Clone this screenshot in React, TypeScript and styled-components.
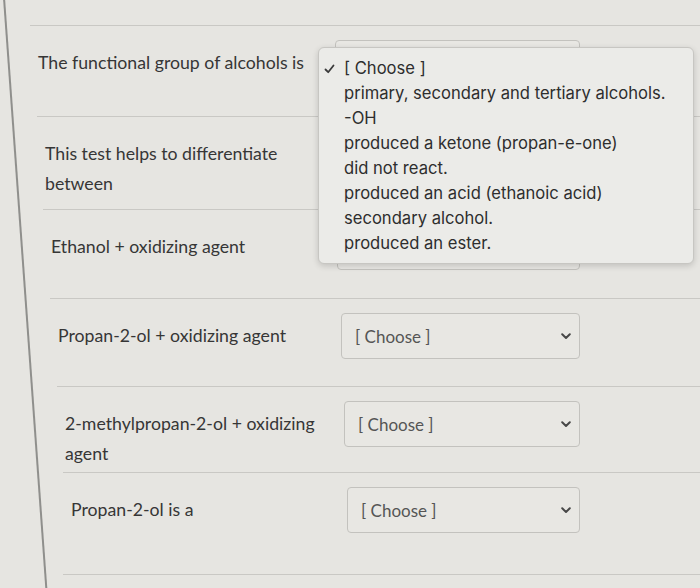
import React from "react";
import styled, { createGlobalStyle } from "styled-components";

const Global = createGlobalStyle`
  html, body { margin: 0; padding: 0; background: #e6e5e1; }
  body { font-family: Lato, "Liberation Sans", sans-serif; }
`;

const Page = styled.div`
  position: relative;
  width: 700px;
  height: 588px;
  overflow: hidden;
  background: #e6e5e1;
  padding-top: 25px;
  box-sizing: border-box;
  &::before {
    content: "";
    position: absolute;
    left: 3px;
    top: -2px;
    width: 1.5px;
    height: 610px;
    background: #8f8f8c;
    transform-origin: top left;
    transform: rotate(-4.1deg);
  }
`;

const Row = styled.div<{ $indent: number; $h: number; $last?: boolean }>`
  display: flex;
  align-items: flex-start;
  margin-left: ${(p) => p.$indent}px;
  height: ${(p) => p.$h}px;
  border-top: 1px solid #c9c8c4;
  ${(p) => (p.$last ? "border-bottom: 1px solid #c9c8c4;" : "")}
  box-sizing: border-box;
`;

const Label = styled.div<{ $w: number }>`
  flex: none;
  width: ${(p) => p.$w}px;
  box-sizing: border-box;
  padding: 22px 10px 0 8px;
  font-size: 17.7px;
  line-height: 30px;
  color: #363636;
`;

const SelectBox = styled.div<{ $w: number }>`
  position: relative;
  flex: none;
  width: ${(p) => p.$w}px;
  height: 46px;
  margin-top: 14px;
  border: 1px solid #c3c2be;
  border-radius: 4px;
  display: flex;
  align-items: center;
  justify-content: space-between;
  padding: 0 8px 0 13px;
  box-sizing: border-box;
  font-size: 17px;
  color: #555;
  background: #e8e7e3;
`;

const Value = styled.span<{ $hidden?: boolean }>`
  visibility: ${(p) => (p.$hidden ? "hidden" : "visible")};
`;

const Chevron = () => (
  <svg width="10" height="7" viewBox="0 0 10 7">
    <path d="M1.2 1.3 L5 5 L8.8 1.3" fill="none" stroke="#474747" strokeWidth="2" strokeLinecap="round" strokeLinejoin="round" />
  </svg>
);

const Menu = styled.div`
  position: absolute;
  left: -18px;
  top: 6px;
  width: 376px;
  z-index: 10;
  box-sizing: border-box;
  padding: 8px 0 7px 4px;
  background: #ebebe8;
  border: 1px solid #c7c6c2;
  border-radius: 6px;
  box-shadow: 0 2px 6px rgba(0, 0, 0, 0.16);
  font-family: Inter, "Noto Sans", sans-serif;
  font-size: 16.6px;
  line-height: 25px;
  color: #2e2e2e;
`;

const MenuItem = styled.div`
  display: flex;
  align-items: center;
  white-space: nowrap;
`;

const CheckCol = styled.span`
  flex: none;
  width: 21px;
  display: flex;
  align-items: center;
  justify-content: flex-start;
  padding-left: 1px;
  box-sizing: border-box;
`;

const Check = () => (
  <svg width="11" height="10" viewBox="0 0 11 10">
    <path d="M1.5 5.5 L4.2 8.2 L9.5 1.5" fill="none" stroke="#3a3a3a" strokeWidth="1.8" strokeLinecap="round" strokeLinejoin="round" />
  </svg>
);

const options = [
  "[ Choose ]",
  "primary, secondary and tertiary alcohols.",
  "-OH",
  "produced a ketone (propan-e-one)",
  "did not react.",
  "produced an acid (ethanoic acid)",
  "secondary alcohol.",
  "produced an ester.",
];

type RowData = { label: string; indent: number; selectX: number; h: number; covered?: boolean };

const rows: RowData[] = [
  { label: "The functional group of alcohols is", indent: 30, selectX: 335, h: 91, covered: true },
  { label: "This test helps to differentiate between", indent: 37, selectX: 336, h: 93, covered: true },
  { label: "Ethanol + oxidizing agent", indent: 43, selectX: 337, h: 89, covered: true },
  { label: "Propan-2-ol + oxidizing agent", indent: 50, selectX: 341, h: 88 },
  { label: "2-methylpropan-2-ol + oxidizing agent", indent: 57, selectX: 344, h: 86 },
  { label: "Propan-2-ol is a", indent: 63, selectX: 347, h: 103 },
];

export default function App() {
  return (
    <>
      <Global />
      <Page>
        {rows.map((r, i) => (
          <Row key={i} $indent={r.indent} $h={r.h} $last={i === rows.length - 1}>
            <Label $w={r.selectX - r.indent}>{r.label}</Label>
            <SelectBox $w={580 - r.selectX}>
              <Value $hidden={r.covered}>[ Choose ]</Value>
              <Chevron />
              {i === 0 && (
                <Menu>
                  {options.map((o, j) => (
                    <MenuItem key={j}>
                      <CheckCol>{j === 0 ? <Check /> : null}</CheckCol>
                      <span>{o}</span>
                    </MenuItem>
                  ))}
                </Menu>
              )}
            </SelectBox>
          </Row>
        ))}
      </Page>
    </>
  );
}
